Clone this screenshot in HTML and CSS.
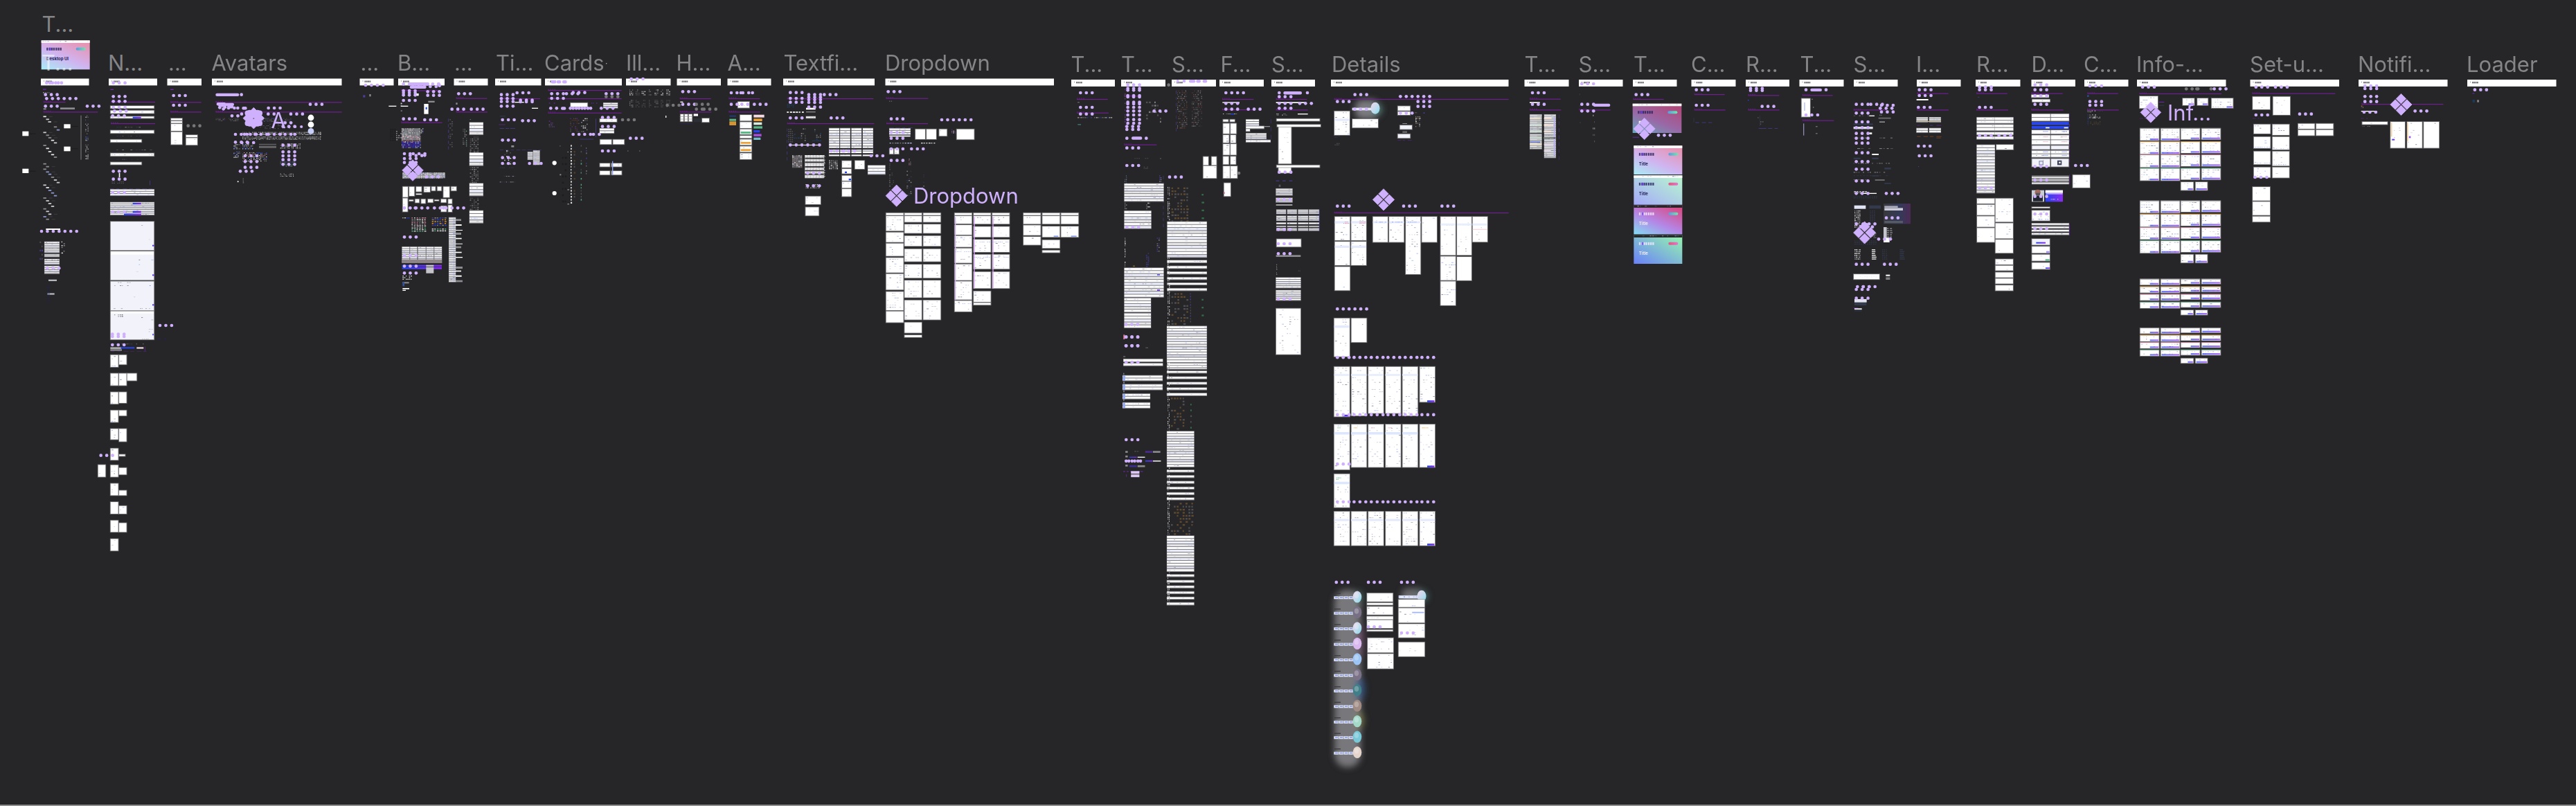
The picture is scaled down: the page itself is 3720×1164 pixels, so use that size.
FILE: index.html
```html
<!DOCTYPE html>
<html lang="en">
<head>
<meta charset="utf-8">
<title>Components</title>
<link rel="stylesheet" href="styles.css">
</head>
<body>
<main class="canvas">
<svg class="art" id="art" width="3720" height="1164" viewBox="0 0 3720 1164" aria-hidden="true">
<defs>
<linearGradient id="cta"><stop offset="0" stop-color="#2744ee"/><stop offset="1" stop-color="#8a2cf2"/></linearGradient>
<linearGradient id="dawn" x1="0" y1="1" x2=".7" y2="0"><stop offset="0" stop-color="#a9ecf6"/><stop offset=".5" stop-color="#d0b4f0"/><stop offset="1" stop-color="#e695b4"/></linearGradient>
<linearGradient id="dusk" x1="0" y1="1" x2=".7" y2="0"><stop offset="0" stop-color="#67a9bd"/><stop offset=".5" stop-color="#9968a6"/><stop offset="1" stop-color="#b04a7c"/></linearGradient>
<linearGradient id="mint" x1="0" y1="1" x2="1" y2="0"><stop offset="0" stop-color="#a5a9fb"/><stop offset="1" stop-color="#b8f8cc"/></linearGradient>
<linearGradient id="neon" x1="0" y1="1" x2=".7" y2="0"><stop offset="0" stop-color="#82dcf4"/><stop offset=".5" stop-color="#b486e6"/><stop offset="1" stop-color="#d64f8c"/></linearGradient>
<linearGradient id="lagoon" x1="0" y1="1" x2="1" y2="0"><stop offset="0" stop-color="#6a80fa"/><stop offset="1" stop-color="#96f8ac"/></linearGradient>
<linearGradient id="teal"><stop offset="0" stop-color="#5a9ae0"/><stop offset="1" stop-color="#6ee8ae"/></linearGradient>
<linearGradient id="rose"><stop offset="0" stop-color="#e0587c"/><stop offset="1" stop-color="#e276cc"/></linearGradient>
<linearGradient id="night"><stop offset="0" stop-color="#39393c"/><stop offset=".6" stop-color="#343a58"/><stop offset="1" stop-color="#4c2a54"/></linearGradient>
<linearGradient id="orb" x1="0" y1="0" x2="1" y2="1"><stop offset="0" stop-color="#f4d6ec"/><stop offset=".6" stop-color="#b9dcee"/><stop offset="1" stop-color="#7fd8e8"/></linearGradient>
<filter id="glow" x="-60%" y="-30%" width="220%" height="160%"><feGaussianBlur stdDeviation="5"/></filter>
</defs>
</svg>
<div class="labels" id="labels"></div>
</main>
<script src="canvas.js"></script>
</body>
</html>
```
FILE: styles.css
```css
body {
  margin: 0;
  background: #262628;
  font-family: Inter, "Liberation Sans", sans-serif;
}

.canvas {
  position: relative;
  box-sizing: border-box;
  width: 3720px;
  height: 1164px;
  overflow: hidden;
  border-bottom: 2px solid #8f8f90;
}

.art {
  display: block;
}

.label {
  position: absolute;
  font-size: 31px;
  line-height: 40px;
  color: #858587;
  white-space: pre;
}

.label--component {
  color: #cfb0fc;
}

.label--ghost {
  color: rgba(255, 255, 255, 0.55);
}

.title {
  font-size: 6px;
  font-weight: 700;
}
```
FILE: canvas.js
```js
const svg = document.getElementById('art');
const layers = ['base', 'dots'].map(() => {
  const g = document.createElementNS('http://www.w3.org/2000/svg', 'g');
  svg.appendChild(g);
  return g;
});
let seed = 7;
const rnd = () => (seed = (seed * 16807) % 2147483647) / 2147483647;
const pick = a => a[Math.floor(rnd() * a.length)];
const parts = [[], []];
const LILAC = '#cfb0fc';
const color = { w: '#fff', v: '#f2f3fa', g: '#8c8c90', d: '#56565a', b: '#2744ee', l: LILAC, n: '#333a4d',
  o: '#f0a030', e: '#5cb888', r: '#e58aa4', u: '#6c28a8', c: 'url(#cta)', k: '#1c1c1e', i: '#4b3fa0' };
const col = c => color[c] || c || '#fff';
const f = n => +n.toFixed(2);
const rect = (x, y, w, h, c, o = 1, rx = 0, layer = 0) =>
  parts[layer].push(`<rect x="${f(x)}" y="${f(y)}" width="${f(w)}" height="${f(h)}" rx="${rx}" fill="${c}" opacity="${o}"/>`);
const circle = (x, y, r, c, layer = 0) =>
  parts[layer].push(`<circle cx="${f(x)}" cy="${f(y)}" r="${r}" fill="${c}"/>`);
const ink = ['#9a9cac', '#b9bbc9', '#5a5f78', '#b9bbc9', '#8ea2f0', '#d0d1dc'];

function marks(x, y, w, h, density, tones) {
  for (let yy = y + 2; yy < y + h - 2; yy += 3.4) {
    for (let xx = x + 1.5; xx < x + w - 3; xx += 3.6) {
      if (rnd() < density) rect(xx, yy, 1 + rnd() * 2.2, 0.9, pick(tones || ink), 0.75);
    }
  }
}
function card(x, y, w, h, fill, density) {
  rect(x - 0.5, y - 0.5, w + 1, h + 1, '#8c8c90', 0.75);
  rect(x + 0.4, y + 0.4, w - 0.8, h - 0.8, fill);
  marks(x, y, w, h, density);
}
function diamonds(x, y, s) {
  const q = 7.1 * s;
  [[0, -8.2], [0, 8.2], [-8.2, 0], [8.2, 0]].forEach(([a, b]) => {
    const cx = x + a * s, cy = y + b * s;
    parts[1].push(`<path d="M${f(cx)} ${f(cy - q)}l${f(q)} ${f(q)}l${f(-q)} ${f(q)}l${f(-q)} ${f(-q)}z" fill="${LILAC}" stroke="${LILAC}" stroke-width=".8" stroke-linejoin="round"/>`);
  });
}

// Each block: origin x, y and units per pixel on both axes, then one drawing command per entry.
function draw(ox, oy, sx, sy, text) {
  const X = v => ox + v / sx, Y = v => oy + v / sy;
  text.split(/[;\n]/).map(s => s.trim()).filter(Boolean).forEach(line => {
    const [cmd, ...raw] = line.split(/\s+/);
    const a = raw.map(v => (isNaN(v) ? v : +v));
    const x = X(a[0]), y = Y(a[1]), w = a[2] / sx, h = a[3] / sy;
    if (cmd === 'W') rect(x, y, w, h, col(a[4]));
    else if (cmd === 'D' || cmd === 'G') for (let i = 0; i < a[2]; i++) circle(x + i * 8.45, y, 2.35, cmd === 'D' ? LILAC : '#77777a', 1);
    else if (cmd === 'Q') rect(x, y, w, 4.4, LILAC, 1, 2, 1);
    else if (cmd === 'L') {
      rect(x, y - 0.4, w, 1.2, '#6f1f92');
      for (let i = 0; i < 4; i++) rect(x + i * 3, y - 1.8, 1.8, 1.2, '#6f1f92', 0.7);
    } else if (cmd === 'K') card(x, y, w, h, '#fff', a[4] === undefined ? 0.22 : a[4]);
    else if (cmd === 'V') card(x, y, w, h, '#f2f3fa', 0.01);
    else if (cmd === 'I') {
      card(x, y, w, h, '#fff', 0.4);
      if (a[5]) rect(x, y - 0.6, w, 1, col(a[5]), 0.8);
      rect(x + w * a[4], y + h - 3, w * (1 - a[4]) - 1, 2.2, 'url(#cta)', 0.7);
    } else if (cmd === 'S') {
      const n = a[4], p = h / n;
      rect(x - 0.4, y - 0.4, w + 0.8, h + 0.8, '#828288');
      for (let i = 0; i < n; i++) {
        const yy = y + i * p;
        rect(x, yy + 0.4, w, Math.max(p - 1.1, 1), i % 3 === 2 ? '#eceefa' : '#fff', i % 4 === 3 ? 0.8 : 1);
        for (let xx = x + 2; xx < x + w - 3; xx += 4) if (rnd() < 0.25) rect(xx, yy + p * 0.35, 1.5 + rnd() * 2, 0.8, pick(ink), 0.6);
        if (a[5]) rect(x + w * 0.6, yy + p * 0.3, w * 0.3, 1, col(a[5]), 0.45);
      }
    } else if (cmd === 'N') {
      const cw = a[4] / sx, ch = a[5] / sy, tones = String(a[6] || 'g').split(',').map(col), dens = a[7] || 0.7;
      // Narrow columns are dashed rules and keep their full dash length
      const mh = a[2] > 4 ? Math.min(ch * 0.55, 2.4) : ch * 0.55;
      for (let yy = y; yy < y + h - 0.4; yy += ch) for (let xx = x; xx < x + w - 0.4; xx += cw)
        if (rnd() < dens) rect(xx, yy, Math.min(cw, w) * (0.45 + rnd() * 0.35), mh, pick(tones), 0.85);
    } else if (cmd === 'Z') {
      for (let i = 0; i < a.length; i += 2) {
        rect(X(a[i]) - 2.2, Y(a[i + 1]) - 0.9, 4.4, 1.8, pick(['#c8c8cc', '#8c8c90', '#e4e4ea', '#8896c8']));
        if (rnd() < 0.5) rect(X(a[i]) + 6, Y(a[i + 1]) - 0.5, 5, 1, '#3c3c40');
      }
    } else if (cmd === 'O') circle(x, y, a[2], col(a[3]));
    else if (cmd === 'M') diamonds(x, y, a[2] || 1);
    else if (cmd === 'R') {
      const [, , , , grad, pill, dark, word] = a;
      rect(x, y, w, h, `url(#${grad})`);
      if (grad !== 'lagoon' || dark) rect(x, y, w, 3.6, dark ? '#262628' : '#fff');
      marks(x, y - 1, w, 6, 0.4);
      const t = dark ? '#f4ecff' : '#25215a';
      [0, 3.4, 6.6, 9.6, 13, 16.2, 19.4].forEach(i => rect(x + 7.5 + i, y + 10.5, 2.3, 4, t, 0.8));
      rect(x + 11.5, y + 10.5, 2.4, 4, '#6a3cf0', 0.8);
      rect(x + w - 20, y + 10.5, 14, 4, `url(#${pill})`, 1, 2);
      if (word) parts[0].push(`<text class="title" x="${f(x + 7.5)}" y="${f(y + 29)}" fill="${t}">${word.replace('_', ' ')}</text>`);
    }
  });
}

const bars = [[[59, 128.5], [157, 227], [241.5, 291], [306, 493.5], [519.5, 568.5], [575, 642], [655.5, 704.5], [715, 781.5],
  [787, 898], [904, 968.5], [977.5, 1041], [1050.5, 1113.5], [1131, 1263], [1278.5, 1522]],
[[1547, 1610], [1619, 1683], [1692, 1756], [1761, 1825], [1836, 1899], [1922, 2178.5], [2201.5, 2265.5], [2280, 2343.5],
  [2358, 2421.5], [2442.5, 2506.5], [2521, 2584], [2598.5, 2662.5], [2677, 2740.5], [2768, 2831.5], [2853, 2917.5],
  [2933.5, 2997], [3010, 3073.5], [3086, 3214.5], [3249.5, 3378], [3406, 3534.5], [3563, 3691.5]]];
bars.forEach((row, i) => row.forEach(([a, b]) => {
  const y = i ? 115 : 113.5;
  rect(a, y, b - a, 9.9, '#fff');
  rect(a + 4, y + 3, 1, 1, '#777');
  for (let k = 0; k < 4; k++) rect(a + 7 + k * 2.3, y + 3, 1.9, 2.4, '#44444c', 0.75);
}));

draw(0, 0, 3, 3, `
R 179 175 210 126 dawn teal 0 Desktop_UI
W 97 569 27 20;W 97 731 27 19;W 277 538 28 18;W 277 635 28 20
W 130 578 24 3 k;W 312 546 26 3 k;W 312 643 26 3 k;W 130 740 24 3 k
W 349 500 4 192 #6d6d6f;W 261 466 63 8 g;W 188 469 12 6 g;W 186 385 14 4 u;N 186 400 30 6 8 6 w,g
D 202 359 3;D 216 359 3;D 197 410 3;D 202 427 6;D 197 460 3;D 378 460 3;L 188 442 96;L 188 485 236
Z 194 505 206 517 215 528 240 550 252 563 194 574 206 586 216 597 228 608 240 619 194 630 206 643 216 657 228 670 240 681 194 710 206 722 194 733 206 745 216 755 228 768 240 780 252 791 194 802 206 813 216 825 228 836 240 848 194 858 206 870 216 882 228 894 194 905 206 916 216 928 194 939 206 950
N 370 500 14 80 5 6 g,w,n;N 370 592 14 18 5 5 b,w,g;N 370 626 14 64 5 6 g,w
W 199 990 62 6;D 180 1002 7;S 193 1047 64 48 6;S 193 1101 64 12 2;S 193 1122 64 24 3;S 193 1152 64 34 4;D 205 1162 3
N 266 1046 18 50 9 8 w,g;N 172 1046 12 82 8 18 d,i;W 210 1211 36 7 #b4b6be;W 205 1270 31 7 #b4b6be;N 205 1235 10 80 6 9 #252550
D 491 359 3;D 491 418 3;D 491 439 3;D 491 465 3;D 496 481 3;D 488 502 3;L 480 442 192;L 480 535 192;W 478 386 14 4 u
K 478 458 190 12;K 478 478 190 14;K 478 504 190 9;W 575 506 36 7 c
N 505 550 100 5 12 5 g,d,n;K 478 564 190 14;N 505 588 100 5 12 5 d,n;K 478 604 136 13;N 505 648 150 5 12 5 g,d,n;K 478 663 190 14;N 505 689 100 5 8 5 d,n;K 478 702 136 12
D 491 742 3;W 515 750 5 18 w;D 491 776 3;N 484 786 50 12 8 6 d;W 648 782 2 20 i
N 476 817 194 3 28 3 i 1;S 478 820 190 28 3;D 488 834 3;S 478 876 190 56 7;W 575 879 36 7 c;W 575 914 36 7 c;W 537 926 75 7 c;D 488 918 3
V 478 959 190 126;V 478 1088 190 126;W 480 1089 186 14;V 478 1218 190 128;V 478 1348 190 124;W 480 1349 186 9
N 490 1223 90 4 10 4 g;N 495 1236 65 4 8 4 g,d;N 632 1236 22 4 8 4 b;N 492 1336 40 4 16 4 g;N 598 1336 50 4 8 4 g;N 495 1362 45 12 8 7 g,d
W 660 1061 8 6 c;W 660 1189 8 6 c;W 660 1318 8 6 c;D 693 1410 3
D 752 414 3;D 752 456 3;L 738 443 134;L 738 485 134;W 738 386 14 4 u;K 740 512 50 10;K 740 524 50 10;K 740 536 50 32;K 740 571 50 56;K 805 584 51 11;K 805 597 51 32;G 815 545 3
L 934 443 547;L 934 485 547;Q 934 404 102;D 1046 410 1
Q 938 444 40;Q 946 450 30;Q 966 446 48;Q 984 456 28;D 952 466 1;D 968 472 1;D 975 464 1;D 990 468 2;D 1030 468 1;Q 1048 462 22;D 1163 468 3;D 1005 502 2;D 1047 494 1;D 1162 494 2
N 935 512 42 14 6 5 d,g,u;N 990 512 46 14 5 5 d,g;N 1120 512 140 14 6 6 d,g,i;N 1105 537 150 20 7 6 d,k;N 1050 572 340 12 7 5 w,g 0.95;N 1050 592 340 12 6 5 w,g 0.95
D 1020 582 3;D 1059 582 3;D 1105 582 3;D 1163 582 3;D 1235 582 2;D 1277 582 1;D 1020 616 3;D 1048 618 3;D 1235 532 2;D 1226 548 3
N 1012 625 26 24 6 6 b,w,g;N 1012 656 26 28 6 6 w,b,g;N 1050 625 45 24 6 6 w,b,g;W 1122 623 75 6 d;W 1122 633 75 8 #68686b
N 1050 660 106 38 6 6 w,g,r,b;D 1062 675 3;D 1062 700 3;D 1062 725 3;D 1041 742 3
D 1226 629 3;D 1226 658 3;D 1226 675 3;D 1226 692 3;D 1226 712 3;N 1214 622 86 24 6 6 w,g;N 1214 700 66 20 6 6 e,i,g;N 1214 752 60 16 5 5 w,g
M 1099 512 1;O 1347 510 4.4 w;O 1347 540 4.4 w;O 1347 568 4.4 #c8d0fa;N 1338 506 18 6 6 5 g
O 1031 787 1 w;N 1052 772 6 20 6 6 g;D 1344 452 3;D 1260 494 3`);
[[-11, -9], [11, -9], [-11, 9], [11, 9], [-4, -4], [4, -4], [-4, 5], [4, 5], [-7, -10], [7, -10], [-7, 10], [7, 10]]
  .forEach(([a, b]) => circle(366.3 + a * 0.8, 170.7 + b * 0.8, 4, LILAC, 1));

draw(420, 0, 3, 3, `
D 324 369 4;W 313 412 9 10 i;W 340 408 7 10 g;W 424 458 33 4;W 476 458 32 4;N 430 558 26 50 9 8 k 1
D 488 364 7;D 528 375 5;D 640 364 1;D 644 371 1;Q 510 357 90;Q 515 371 72;D 488 393 3;D 593 397 3;D 488 412 3;D 593 413 3;D 488 402 3;D 488 435 3;L 478 392 165
W 540 405 14 10;N 476 446 10 36 9 8 w,g;W 595 437 28 7 g;W 577 450 19 44 w;W 584 464 6 10 b;D 488 515 3;D 580 519 3;L 478 531 178
W 480 556 80 52 #6e6e74;W 480 614 80 24 #2c2470
N 480 556 84 40 5 6 w,g,#9aa 0.95;N 480 588 84 26 5 6 w,r,g 0.95;N 480 614 84 26 5 6 b,i,u,w 0.95;N 456 567 20 42 9 9 g;N 564 556 12 22 6 6 b,w
D 492 666 1;D 517 666 1;D 530 666 3;D 517 674 3;D 580 673 1;D 492 687 3;D 492 704 3;M 528 738 1;Q 514 700 26
W 484 748 185 24 #8e8e96;N 484 748 185 24 8 7 w,#b8c4f4,#eed 0.95;D 588 766 3
K 484 808 24 47;K 512 808 24 42;K 542 808 25 23;K 576 808 28 25;K 609 808 18 19;K 634 808 19 19;K 660 808 28 48;K 694 808 24 19;K 542 838 25 6
K 484 858 23 60;K 512 865 19 7;K 538 862 19 17;K 564 862 20 20;K 593 862 24 16;K 622 865 20 6;K 650 862 24 16;K 681 862 18 21;K 650 892 25 26;K 681 888 18 31
D 492 901 1;D 517 901 4;D 539 901 1;D 622 901 6;D 661 901 1
N 484 942 28 7 8 7 w,b;N 523 942 64 40 11 7 w,g,r 1;N 523 986 64 20 11 7 w,e 1;N 611 942 64 40 11 8 b,i,g,o 1;N 611 990 64 10 11 8 e,w 1
S 685 942 29 280 34 #9aa8e8;W 714 949 24 8 g;W 714 972 26 6 w;W 714 996 30 3;W 714 1008 24 9 g;W 714 1031 26 5;W 714 1055 30 3;W 714 1067 24 8 g;W 714 1091 26 5;W 714 1113 30 4;W 714 1155 30 9 g;W 714 1172 24 5;W 714 1193 26 6;W 714 1214 30 8 g
D 492 1027 3;S 482 1069 32 70 8;S 517 1069 30 70 8;S 551 1069 33 70 8;S 587 1069 32 70 8;S 622 1069 32 70 8;W 482 1124 172 15 #8d8588;D 492 1107 3
W 482 1148 172 18 c;W 586 1148 33 36 #c4c4ca;W 482 1155 172 2 #111130;D 492 1153 3;D 492 1183 3;N 484 1194 42 18 7 7 w;W 484 1222 28 6 g;W 484 1222 8 18 #34509a;W 484 1248 29 5;W 484 1256 14 4
D 727 406 3;L 716 426 134;W 715 445 7 8 g;D 698 473 3;D 782 473 3;L 716 485 136;N 682 514 4 130 4 24 i 1;N 688 516 16 124 8 9 d;N 745 558 18 76 7 8 d,g,e;N 776 516 7 10 6 6 g
S 774 530 59 54 4;N 776 592 36 66 8 8 d,g;S 774 661 59 57 4;N 776 724 36 66 8 8 d,g;S 774 794 59 55 4;N 776 857 36 50 8 8 d,g;S 774 912 59 55 4
D 980 402 3;D 912 410 3;D 912 427 3;D 912 440 3;D 995 434 3;D 995 441 3;D 912 460 3;L 905 427 175;W 970 441 40 4;W 1044 467 27 4;W 905 502 24 3 n;D 917 519 3;D 1004 523 3;W 901 539 28 2 u
W 905 556 20 2 i;W 930 556 16 2 i;W 950 556 22 2 i;D 917 607 3;W 955 630 12 8 g;N 905 649 175 3 24 3 i 1;N 925 652 30 60 8 8 w,d 0.4;D 917 683 3;D 917 708 3;S 1050 652 28 62 11;S 1026 658 22 34 6;D 1034 708 1;D 1059 708 2;N 960 560 6 40 6 9 #252550;N 905 725 60 3 8 6 n;N 905 762 65 4 9 6 g,n;N 905 787 65 4 9 6 g,n`);

draw(760, 60, 3, 3, `
W 345 93 4 4 #b0b0b0
Q 106 168 24;Q 131 168 20;Q 156 168 20;L 94 211 319;L 94 247 319;L 94 309 319;D 110 226 3;D 174 226 1;D 199 226 1;D 203 221 1;D 224 226 1;D 228 221 2;D 346 226 3;G 346 239 3;D 110 246 3
K 191 265 75 19 0;S 334 265 62 24 3;D 106 289 2;Q 150 283 22;D 191 289 4;D 203 289 4;D 325 289 3;N 98 265 24 8 7 7 u,d;N 282 265 34 8 7 7 u
N 98 335 26 34 7 8 g,d,u 0.6;N 190 332 40 64 7 7 d,#63331f,u 0.5;N 237 332 30 64 8 8 g,w,d 0.45;W 300 334 2 80 i;D 203 402 2;D 253 402 2;D 291 402 2;W 232 422 60 2 i
K 318 334 75 15;D 330 329 3;D 330 368 3;S 318 376 62 22 2;K 319 424 51 22;K 375 424 50 22;D 330 474 3;K 318 527 45 16;K 369 527 45 16;K 318 560 45 18;K 369 560 45 18;W 372 518 4 60 #8ea2f0;G 417 339 3
O 122 526 3.1 w;O 122 657 3.1 w;N 192 448 8 258 8 13 w 1;N 206 448 10 258 9 13 #5a4426,d 0.6;N 236 448 6 240 6 13 e,d 0.6;N 259 448 5 125 5 11 g,i;N 145 445 6 10 6 6 g;N 178 478 8 3 8 3 w;N 155 500 16 200 12 27 k;W 178 640 8 4 g;W 178 702 8 4 g;W 145 574 6 6 g
D 455 162 3;N 447 208 18 28 6 7 w,g;N 474 208 15 28 6 7 g,d;N 500 208 15 28 6 7 g,w;N 531 208 12 28 6 7 g;N 556 208 14 28 6 7 w,g;N 583 208 12 28 6 7 w,g;N 607 208 14 28 6 7 w,g
N 447 253 18 36 6 7 d,g;N 474 253 15 36 6 7 d;N 500 253 15 36 6 7 d;N 531 253 12 36 6 7 d;N 556 253 14 36 6 7 g,d;N 583 253 12 36 6 7 d;N 607 253 14 36 6 7 d
G 611 276 3;W 603 321 4 9;D 451 419 3;W 439 472 3 4 g;W 490 472 3 4 g
D 678 217 3;L 665 247 135;D 678 272 3;G 737 272 3;G 737 293 2;G 770 293 1;G 795 293 1;G 821 293 1;L 665 305 137;W 667 260 12 4
K 667 314 15 33;K 685 314 15 33;K 703 314 16 33;W 665 324 56 2 g;W 665 335 56 2 g;W 725 313 19 10;W 725 333 34 16 #2c3036;K 761 332 32 18 0;W 665 354 56 2 #2a2a60
D 888 222 1;D 913 222 3;D 930 222 1;D 980 222 1;L 877 247 135;K 916 260 51 28 0.1;D 888 272 2;D 934 272 2;D 988 272 3;L 877 305 136;W 880 260 26 2 n
W 880 320 29 6 #223a7a;W 880 335 29 9 e;W 880 346 29 17 #d49434;W 880 366 29 3 #224
K 925 317 52 27;K 925 348 52 28;K 925 379 52 24;W 929 390 44 9 e;K 925 407 52 12;K 925 423 52 26;W 929 435 44 8 o;K 925 453 52 26;W 929 466 44 8 o;K 925 483 52 28
W 985 317 46 12 #f4dbe2;W 985 334 37 11 o;W 985 350 36 11 #d6ecdf;W 985 367 38 10 e;W 985 384 27 10 b;W 985 400 34 11 #a44cd8;W 985 416 30 10 #74bcc8
D 1144 221 3;D 1144 246 3;D 1144 263 3;D 1224 230 3;D 1291 230 3;D 1224 241 3;D 1224 252 3;D 1224 264 3;D 1224 284 3;L 1130 247 374;L 1130 355 377
N 1130 270 40 14 8 6 #246;N 1129 303 78 11 13 11 w 1;W 1212 287 41 8;W 1212 303 41 4 g;S 1212 324 41 9 1;D 1144 331 3;D 1321 331 3
N 1129 376 3 130 3 25 i 1;N 1135 378 22 60 8 9 d;N 1190 376 25 60 8 10 d,g 0.5;N 1160 400 30 30 8 8 #247 0.4;N 1240 380 40 54 8 8 #247,g 0.4;W 1140 447 130 3;D 1144 448 2;D 1194 448 4
S 1312 375 44 122 11;S 1360 375 43 122 11;S 1409 375 43 122 11;S 1458 375 44 122 11;W 1312 462 190 6 #262628;W 1312 484 190 6 #262628;D 1321 474 5;D 1376 474 1;D 1494 495 3
W 1152 493 44 54 #58585c;N 1152 493 44 54 9 6 w,g,#977 0.95;W 1207 492 82 100 #c8c8cc;N 1207 492 82 100 13 5 w 1;W 1207 503 82 6 #3a3a3c;W 1207 520 82 6 #3a3a3c;W 1207 540 82 6 #3a3a3c;W 1207 557 82 5 #3a3a3c;W 1207 572 82 6 #3a3a3c;D 1219 570 3;D 1219 625 3;N 1210 618 62 20 7 7 w,g
K 1209 670 67 36;K 1209 717 59 38;N 1312 514 35 40 8 7 w,g 0.95;K 1367 516 42 31;K 1367 551 42 22;K 1367 580 42 24;K 1367 606 42 29;K 1367 638 42 34;K 1423 515 43 38;S 1480 536 75 40 3;W 1380 563 9 7 b;W 1397 594 10 7 b`);

draw(1250, 60, 3, 3, `
D 98 217 3;L 88 246 183;N 86 257 28 5 8 5 g;D 111 335 3;D 330 339 6;L 90 355 180;N 102 372 90 3 28 3 i 1
S 103 376 44 28 3;S 148 376 46 28 3;W 103 407 91 5;D 111 394 3;D 111 419 3;K 215 379 44 45 0.02;K 263 379 44 45 0.02;K 318 379 35 31 0.1;N 372 380 16 20 7 5 w,i,r;K 394 379 77 46 0.12
N 104 438 98 7 11 7 g,#c8d0ff 0.9;N 240 438 60 7 11 7 w,#a8b8ff 1;K 103 463 18 25;K 124 463 21 25;D 111 465 3;D 199 465 3;D 111 515 3;N 187 508 8 30 6 6 r,g
N 103 520 6 150 6 8 g,d;N 113 560 8 60 6 8 d 0.5;N 178 560 20 110 8 8 n,g 0.5;N 243 568 14 70 7 8 n,g 0.5;M 134 668 1.02
K 88 742 77 11;K 88 755 77 66 0.3;K 88 826 77 44;K 88 874 77 56;K 88 936 77 66 0.3;K 88 1006 77 70;K 88 1083 77 82 0.3;K 88 1168 77 50 0.1
K 168 742 76 11;K 168 755 76 28;K 168 791 76 40 0.3;K 168 841 76 46 0.3;K 168 898 76 56 0.3;K 168 965 76 60 0.3;K 168 1034 76 76 0.3;K 168 1120 76 86 0.3;K 168 1216 76 47 0.1;K 168 1271 76 11
K 249 742 77 11;K 249 755 77 28;K 249 791 77 40;K 249 841 77 46;K 249 898 77 56;K 249 965 77 60;K 249 1034 77 76;K 249 1120 77 86
K 385 742 76 11;K 385 755 76 35;K 385 794 76 44;K 385 841 76 50;K 385 895 76 65;K 385 964 76 71;K 385 1038 76 81;K 385 1122 76 49 0.08
K 467 742 76 11;K 467 755 76 36;K 467 801 76 47;K 467 857 76 56;K 467 922 76 64;K 467 997 76 73;K 467 1081 76 48 0.1;K 467 1131 76 11
K 548 742 76 11;K 548 755 76 36;K 548 801 76 47;K 548 857 76 56;K 548 922 76 64;K 548 997 76 73
W 387 760 4 360 #d0b0f0;W 469 760 4 310 #d8a0f4;W 550 760 4 310 #d8a0f4
N 387 850 70 4 8 4 #8ea2f0;N 387 909 70 4 8 4 #8ea2f0;N 470 867 70 4 8 4 #8ea2f0;N 550 867 70 4 8 4 #8ea2f0;N 470 933 70 4 8 4 #8ea2f0;N 550 933 70 4 8 4 #8ea2f0;N 387 1135 70 4 8 4 #8ea2f0
K 683 742 76 11;K 683 755 76 36 0.1;K 683 795 76 45 0.1;K 683 845 76 37 0.1;K 765 742 77 11;K 765 755 77 36 0.1;K 765 800 77 48 0.1;K 765 859 77 37 0.08;K 765 904 77 11;K 846 742 77 11;K 846 755 77 36 0.1;K 846 800 77 48 0.1
W 815 841 20 5 #8ea2f0;W 890 841 24 5 #8ea2f0
D 931 222 3;L 915 250 134;W 918 261 9 5 d;D 931 285 3;L 915 309 138;D 931 314 3;N 919 328 160 6 8 6 w,b,g 0.9;W 919 357 14 5 #3a6a6a`);

draw(1580, 60, 3, 3, `
D 146 188 3;D 146 203 3;D 146 211 3;D 146 234 3;D 146 240 3;D 146 263 3;D 146 270 3;D 146 285 3;D 146 301 3;D 146 318 3;D 146 338 3;D 146 354 3;D 142 368 3;D 142 381 3;L 130 236 60
D 260 301 3;N 225 260 65 90 12 14 d,g 0.35;N 132 205 6 180 6 10 u,d 0.5;D 142 419 1;Q 162 412 46;D 226 419 1;L 130 447 141;D 142 461 3;N 175 505 60 4 9 5 d;W 285 505 6 4 d;D 142 537 3;N 215 542 22 10 7 6 d
N 132 580 12 34 6 8 #68a,d;N 282 580 12 34 6 8 g,i;N 299 582 3 224 3 26 i 1;S 131 615 170 78 7;N 132 698 10 32 6 8 g;N 226 698 14 32 6 8 w,g;S 131 733 116 78 6;D 142 804 3
N 132 850 8 125 7 8 g,w;N 272 850 14 60 7 8 g,i;N 226 916 14 60 7 8 i,b;W 168 971 9 3 #a58030;S 131 980 170 128 10;W 273 1008 12 5 #5a5ad8;W 273 1074 12 6 #7a4ad8;S 131 1111 115 62 5;S 131 1177 115 64 5;D 138 1226 3
D 138 1280 3;W 127 1270 6 20 r;D 138 1318 3
Q 356 165 12;D 390 171 1;Q 411 165 28;Q 442 165 20;Q 470 165 20;G 323 188 1;N 354 212 3 168 3 27 i 1;N 360 212 45 165 5 8 d,#704030,g,#333 0.7;N 424 212 46 155 5 8 d,#704040,g,#333 0.7;D 327 587 3
N 318 630 8 148 6 7 g,w;N 335 632 70 145 13 13 d,#6a5030 0.5;N 466 660 14 118 14 34 #347850 1;S 317 780 171 156 12
S 317 947 171 12 1;S 317 972 171 12 1;S 317 997 171 11 1;S 317 1021 171 11 1;S 317 1045 171 10 1;S 317 1069 171 11 1;N 318 937 8 296 6 7 g,w;N 335 1090 70 145 13 13 d,#6a5030 0.5;N 466 1115 14 100 14 34 #347850 1;N 416 1090 5 140 5 12 i,d
S 317 1234 171 186 14
K 472 498 24 38 0.1;K 508 498 23 38 0.1;K 472 538 59 55 0.15
D 571 222 4;L 555 250 136;D 571 268 3;W 556 262 74 4;D 571 293 3;D 668 293 3;L 555 295 135;N 558 312 68 5 7 5 w,g;W 592 312 14 4 b
K 558 337 24 11;K 588 337 22 11;K 558 354 29 46;K 590 354 27 46;K 558 404 27 35;K 590 404 25 36;K 558 443 30 49;K 590 443 27 49;K 558 497 26 36;K 590 497 25 36;K 558 539 31 54 0.1;K 590 539 31 54 0.1;K 562 612 30 59 0.04;W 563 652 4 8 r;G 627 570 1
S 658 337 56 30 3;S 658 366 78 12 1;S 658 378 17 12 1;W 736 366 26 4 g;S 658 397 88 26 3;S 658 426 106 11 1;N 765 336 3 102 3 34 i 1
D 802 222 1;Q 820 216 80;D 924 222 1;D 802 239 3;L 788 250 134;D 802 268 3;W 788 262 130 5;D 891 268 1;D 916 268 2;D 802 289 3;L 788 296 138;N 790 312 44 10 6 5 g,w;W 882 312 44 4
K 798 368 57 162 0.14;K 790 334 188 11 0.02;K 792 359 190 11 0.02;K 798 540 56 30 0.05;K 790 535 188 11 0.02;D 802 566 3
W 788 602 14 3 i;W 816 602 14 3 i;W 845 602 14 3 i;W 800 620 8 10 d;S 788 637 71 30 4;S 788 677 71 20 3;W 788 706 71 4 #ddd;D 798 684 3
S 790 728 41 20 3;S 837 728 41 20 3;S 884 728 43 20 3;S 931 728 43 20 3;S 790 755 41 22 3;S 837 755 41 22 3;S 884 755 43 22 3;S 931 755 43 22 3;S 790 784 41 8 1;S 837 784 41 8 1;S 884 784 43 8 1;S 931 784 43 8 1;S 790 798 41 22 3;S 837 798 41 22 3;S 884 798 43 22 3;S 931 798 43 22 3;W 976 728 2 92 i
W 788 748 188 5 #2c2c2e;W 788 778 188 5 #2c2c2e;W 788 793 188 5 #2c2c2e;W 788 803 188 5 #2c2c2e;D 798 814 3
K 790 855 107 35 0.03;D 798 876 3;D 798 919 3;W 788 925 107 8 g;N 789 965 6 45 6 7 g;N 878 992 16 4 6 5 d
S 788 1022 107 46 5;S 788 1077 107 45 5;D 798 1115 3`);

draw(1580, 440, 2.613, 2.272, `
S 275 70 150 120 14;S 275 199 150 8 1;S 275 217 150 8 1;S 275 236 150 8 1;S 275 254 150 8 1;S 275 272 150 8 1;S 275 290 150 9 1;N 277 190 8 225 5 6 g,w;N 290 305 50 105 11 10 d,#6a5030 0.45;N 363 325 8 85 8 19 #347850,d 1
S 275 415 102 118 14;S 275 542 102 8 1;S 275 560 102 8 1;S 275 579 102 8 1;S 275 598 102 8 1;S 275 616 102 8 1;S 275 633 102 8 1;N 277 535 8 220 5 6 g,w;N 290 650 80 105 11 10 d,#6a5030 0.45
S 275 758 102 118 13;S 275 885 102 8 1;S 275 904 102 8 1;S 275 922 102 8 1;S 275 941 102 8 1;S 275 959 102 8 1;S 275 977 102 9 1;N 277 878 8 106 5 6 g,w
D 121 106 3;D 121 135 3;W 110 168 8 5 d;S 111 178 148 10 1;S 111 192 148 9 1;D 121 189 3;W 194 140 10 3 d
S 108 232 150 18 2;S 108 261 150 19 2;S 108 292 103 18 2;S 108 321 103 19 2;W 109 233 8 17 #90a4f4;W 109 262 8 17 #90a4f4;W 109 293 8 17 #90a4f4;W 109 322 8 17 #90a4f4;N 110 224 8 92 8 29 g 1
D 121 443 3;W 118 480 9 6 g;N 132 480 50 4 10 5 d;W 193 480 28 6 #4a2c90;W 222 480 28 6 g;W 118 495 9 6 g;W 133 499 28 3 c;W 164 499 28 3 w;D 121 513 3;D 131 513 3;W 193 511 28 4 c;W 222 511 30 4 #ddd;W 118 525 9 6 g;W 133 527 28 6 #3a2c90;W 164 527 28 6 g
N 110 546 70 5 13 5 u;W 139 546 32 20 #dcc8f0;W 137 555 36 2 k;W 121 557 2 8 u
K 686 12 94 152 0.12
D 918 14 6;K 905 44 60 127 0.1;K 970 44 59 80 0.04;W 906 68 58 8 #e4eafc
D 918 173 1;D 940 173 2;D 981 173 3;D 1046 173 3;D 1109 173 3;D 1174 173 3;D 1237 173 3
K 905 203 60 165;K 970 203 59 162;K 1034 203 59 154;K 1099 203 59 154;K 1163 203 59 162;K 1228 203 59 117;W 906 227 58 7 #e8eefc;W 970 227 58 7 #e8eefc;W 1034 227 58 7 #e8eefc;W 1099 227 58 7 #e8eefc;W 1163 227 58 7 #e8eefc;W 1257 314 27 6 c;W 937 361 26 6 c
D 918 361 3;D 981 361 3;D 1046 361 3;D 1109 361 3;D 1174 361 3;D 1237 361 3
K 905 392 60 150 0.18;K 970 392 59 142 0.16;K 1034 392 59 142 0.16;K 1099 392 59 142 0.16;K 1163 392 59 142 0.16;K 1228 392 59 142 0.14;W 906 418 58 8 #dce6fc;W 970 418 58 8 #dce6fc;W 1034 418 58 8 #dce6fc;W 1099 418 58 8 #dce6fc;W 1163 418 58 8 #dce6fc;W 1257 528 27 6 c;D 918 523 3
N 918 403 14 4 5 4 e 1;N 980 403 14 4 5 4 o 1;N 1045 403 14 4 5 4 r 1;N 1109 403 14 4 5 4 r 1;N 1172 403 14 4 5 4 e 1;N 1237 403 22 4 5 4 o 1
K 905 555 60 111 0.18;W 906 581 58 8 #dce6fc;N 914 567 18 10 5 5 e
D 918 647 3;D 981 647 3;D 1046 647 3;D 1109 647 3;D 1174 647 3;D 1237 647 3
K 905 678 60 113;K 970 678 59 113;K 1034 678 59 113;K 1099 678 59 113;K 1163 678 59 113;K 1228 678 59 113;W 906 703 58 7 #e4eafc;W 970 703 58 7 #e4eafc;W 1034 703 58 7 #e4eafc;W 1099 703 58 7 #e4eafc;W 1163 703 58 7 #e4eafc;W 1228 703 58 7 #e4eafc;W 1257 784 27 6 c
D 914 911 3;D 1035 911 3;D 1160 911 3
K 1029 946 99 29 0.1;K 1029 978 99 8 0;K 1029 990 99 28 0.1;S 1029 1022 99 12 1;K 1029 1034 99 28 0.1;K 1029 1066 99 6 0;D 1035 1057 3;K 1031 1093 99 49 0.16;K 1031 1145 99 50 0.16`);

// Glowing profile strips
parts[0].push('<g filter="url(#glow)"><rect x="1927" y="852" width="38" height="256" rx="18" fill="#78787c"/><ellipse cx="1962" cy="862" rx="6" ry="9" fill="#5a8a7a" opacity=".6"/><ellipse cx="1965" cy="925" rx="6" ry="25" fill="#7a4a72" opacity=".5"/><ellipse cx="1964" cy="995" rx="7" ry="16" fill="#35609a" opacity=".7"/><ellipse cx="1964" cy="1040" rx="6" ry="12" fill="#9a9a50" opacity=".5"/><rect x="2024" y="850" width="32" height="20" rx="8" fill="#6c6c70"/><circle cx="2054" cy="861" r="8" fill="#45706c"/><rect x="1957" y="144" width="34" height="28" rx="10" fill="#7c7c80"/><circle cx="1988" cy="158" r="8" fill="#557f78"/></g>');
['url(#orb)', '#777084', 'url(#orb)', '#d8b8ee', '#9cc4f4', '#7c7288', '#417f88', '#a08c84', '#a4d8c8', '#78c8d8', '#e4d4cc'].forEach((c, i) => {
  const y = 862 + i * 22.45;
  rect(1926.3, y - 0.8, 28, 4, '#dfe5fb');
  [0, 7, 14, 21].forEach(d => { rect(1928 + d, y + 0.3, 4, 1.4, '#7f8fd8'); rect(1932.8 + d, y - 0.8, 0.7, 4, '#777'); });
  rect(1927, y - 5.5, 9, 1.2, '#38383c');
  parts[0].push(`<ellipse cx="1960" cy="${f(y)}" rx="6.3" ry="8.6" fill="${c}"/><ellipse cx="1959" cy="${f(y - 2)}" rx="3.2" ry="4" fill="#fff" opacity=".25"/>`);
});
parts[0].push('<ellipse cx="2053" cy="861" rx="6.5" ry="8.5" fill="url(#orb)"/><ellipse cx="1986" cy="156.3" rx="6.5" ry="8.5" fill="url(#orb)"/>');

draw(1580, 440, 2.613, 2.272, `
W 1149 954 72 10 #dfe5fb;N 1150 957 70 5 9 6 #7f8fd8,#b0b8e8;K 1148 967 100 26 0.14;K 1148 995 100 49 0.16;W 1200 1008 45 4 #a0b4fa;K 1148 1047 100 46 0.1;D 1160 1077 3;K 1148 1107 100 48 0.14`);

draw(1900, 60, 3, 3, `
L 80 250 756;D 170 230 3;D 367 238 6;D 94 260 3;D 443 260 3;D 443 281 3;K 80 301 68 105 0.25;W 82 334 64 10 #e4eafc;N 82 408 20 12 8 6 n;N 82 440 20 8 8 6 d
W 158 287 82 11 #e4e6f4;D 169 293 3;K 158 335 113 39 0.12
K 355 279 55 21 0.3;K 355 303 55 16;D 367 310 3;N 430 307 12 4 6 5 g;W 467 307 5 5 i;N 432 324 18 50 8 7 g,w,#a08070;W 376 354 20 3 g;V 364 362 54 19;W 376 388 20 8 #666;V 355 400 55 19;N 355 426 64 3 22 3 u 1
M 294 685 1.02;D 94 713 3;D 381 713 3;D 547 713 3;L 80 742 756
K 82 758 67 104;K 153 758 67 104;K 82 866 67 104;K 153 866 67 104;K 82 975 67 104 0.04;W 83 778 65 10 #e4eafc;W 154 778 65 10 #e4eafc;W 83 884 65 10 #e4eafc;W 154 884 65 10 #e4eafc;N 120 780 26 8 7 6 r;N 190 780 26 8 7 6 r
K 247 758 66 112 0.14;K 317 758 66 112 0.12;K 389 758 66 251 0.22;K 459 758 67 112 0.03;W 248 779 65 8 #e4eafc;W 318 779 65 8 #e4eafc;W 390 779 65 8 #e4eafc;N 260 781 45 5 8 5 #7f94f0;N 330 781 45 5 8 5 #7f94f0;N 400 781 45 5 8 5 #7f94f0
K 540 758 67 168 0.16;K 611 758 65 168 0.16;K 679 758 66 111 0.16;K 540 930 67 105 0.16;K 611 932 65 104 0.03;K 540 1038 67 106 0.14;W 541 788 65 9 #e8eefc;W 612 788 64 9 #e8eefc;W 680 788 64 9 #e8eefc;N 545 966 58 5 8 5 #8ea2f0;N 545 1074 58 5 8 5 #8ea2f0;W 680 812 64 4 #f8d8e0`);

draw(2180, 60, 3, 3, `
D 99 222 3;L 87 249 134;W 87 262 44 5;D 99 272 3;L 87 296 136;S 88 316 52 150 20 #a8b8a0;S 149 316 51 188 24 #d0e8dc;N 88 330 100 120 100 28 #cfe0d6,#ead8dc,#f0e4cc 1;W 140 316 9 190 #262628;N 149 330 51 160 51 28 #cfe8da,#fae0d4,#f0e0f0 1;W 88 434 44 4 #4050c0;W 191 325 6 170 #b8b0ec;N 213 316 3 194 3 30 i 1;W 88 395 52 4 #262628;W 149 416 51 4 #262628
D 313 183 3;D 313 272 3;Q 362 269 74;L 301 296 136;D 313 301 3;N 302 225 5 150 5 50 n;N 305 350 8 4 5 4 g;N 360 317 12 120 6 28 d,g
D 548 230 3;L 535 250 133;R 533 269 212 127 dusk teal 0;W 560 344 10 12 w;M 584 378 1.02;D 645 406 3;W 533 413 28 3 u
R 538 451 210 125 dawn teal 0 Title;R 538 580 210 127 mint rose 0 Title;R 538 709 210 126 neon teal 1 Title;R 538 838 210 125 lagoon rose 1 Title
D 809 209 3;L 800 229 132;D 809 276 3;L 800 296 135;W 805 350 16 2 i;W 833 350 18 2 i;W 861 350 16 2 i;W 797 330 2 20 n
D 1044 203 3;D 1044 212 3;L 1033 233 135;D 1094 281 3;L 1033 296 136;W 1032 252 4 4 b;W 1074 328 5 4 d;N 1086 345 14 18 8 10 d;W 1084 320 2 46 n;W 1079 376 16 2 i;W 1095 376 17 2 i;W 1120 376 18 2 i;W 1148 376 14 2 i
D 1284 209 1;Q 1303 203 50;D 1371 209 1;L 1268 233 132;K 1264 246 39 81 0.03;W 1276 264 4 36 #b0bcf8;D 1284 318 3;W 1309 248 4 4 g;W 1314 283 4 4 g;L 1268 342 137;W 1272 355 4 52 #8a8ab0;W 1326 367 8 3 g;W 1326 397 8 3 g`);

draw(2660, 60, 3, 3, `
D 62 272 3;D 125 272 2;D 175 272 1;D 171 276 3;D 166 289 3;L 50 296 140;D 171 305 3;D 62 310 3;D 62 348 3;D 62 373 3;D 62 398 3;D 62 419 3;D 62 440 3;D 62 482 3;D 62 520 3;D 62 553 3;D 62 604 3
N 50 320 95 6 12 6 g,d;W 118 320 23 4;W 158 329 54 6 #666;W 162 346 24 5 g;N 162 317 15 6 6 6 g;W 50 355 84 7 n;W 50 369 84 10 #dcdce8;W 118 394 12 8 w;N 50 416 165 6 16 6 g,d 0.5;N 50 462 165 6 16 6 g,d 0.5;W 130 486 29 6 w;W 50 503 30 7 n;W 130 503 28 7 n;N 50 526 165 6 10 6 g,d 0.6;W 184 546 28 8 n;N 50 566 150 3 10 3 w,g;N 50 580 150 5 14 5 n;N 50 598 60 4 10 4 g,w;W 143 598 42 4 g;W 184 612 28 5 n;W 130 580 30 4 n
N 52 648 60 8 12 5 w 1;W 80 656 70 4;N 50 670 98 12 8 6 n 1;D 62 658 3;D 192 658 3
W 53 710 50 15 #e0e4f4;N 54 732 26 75 7 7 w,g 0.95;W 118 710 50 14 n;N 120 732 26 75 9 7 n 1;W 180 702 117 88 url(#night);W 184 712 58 8 #aab;W 184 721 80 11 #cacad8;W 184 777 80 10 #555a66;D 192 764 3
D 62 790 1;D 92 790 3;D 81 803 3;M 98 828 1.05;Q 84 786 30;N 130 830 22 20 7 6 w,g;W 180 804 14 66 #c4c4cc;N 194 808 16 48 14 9 g 1;W 180 850 26 20 w;D 159 856 3;N 54 862 100 20 9 7 n 1
N 54 900 24 48 7 8 w,g 1;N 129 900 30 48 29 8 w 1;N 174 900 24 48 8 8 n 1;N 250 900 30 48 29 8 n 1;D 62 965 3;D 184 965 3
K 50 1007 113 24 0;N 56 1012 92 14 10 5 #eef0fa;W 190 1010 18 6 w;W 190 1020 18 3 g;W 190 1027 18 3 w;D 67 1062 4;D 92 1062 1;D 118 1062 1;D 62 1074 3;D 62 1112 3;W 54 1116 53 14 #e4e4ee;W 54 1131 52 12 n;W 50 1153 20 3 u;W 54 1156 32 5 w;W 54 1162 32 6 n
D 335 209 3;L 325 225 136;D 335 234 3;W 323 249 51 6;D 331 285 3;L 325 296 137;S 323 328 49 22 3;S 378 328 50 22 3;S 323 375 49 20 2;S 378 375 50 20 2;W 323 345 105 3 #c8b890;N 325 362 105 4 28 4 u,i;N 325 410 105 10 28 6 #724020 0.5;D 331 453 3;D 335 495 3;N 324 540 14 6 6 6 i
D 596 197 3;D 596 209 3;L 582 225 134;W 588 239 8 4 n;D 621 285 2;D 596 285 1;L 582 296 138;S 584 328 79 27 2;S 663 328 79 27 2;S 584 359 79 28 2;S 663 359 79 28 2;S 584 392 79 13 1;S 663 392 79 13 1;S 584 411 79 13 1;S 663 411 79 13 1;D 596 407 3;D 680 407 3
S 584 447 78 210 16;D 596 633 3;K 668 446 75 23 0.1
K 584 679 78 24 0.1;K 584 706 78 47 0.1;K 584 756 78 48 0.14;K 584 807 78 63 0.1;K 664 679 78 103 0.12;K 664 786 78 68 0.08;K 664 857 78 60 0.06;K 664 942 78 25 0.18;K 664 970 78 23 0.1;K 664 999 78 24 0.14;K 664 1026 78 24 0.1;K 664 1055 78 25 0.16
D 836 188 3;D 836 209 3;L 820 225 136;S 821 230 75 13 1;D 836 235 3;S 824 250 77 13 1;D 836 272 3;L 820 296 139
S 822 313 80 32 2;S 905 313 78 32 2;W 822 348 161 14 #2a46e4;W 822 366 161 13 #2a46e4;W 882 371 17 5 w;W 962 371 18 5 w;S 822 383 80 18 1 b;S 905 383 78 18 1 b;S 822 405 80 42 2 r;S 905 405 78 42 2 r;V 822 450 80 18;V 905 450 78 18;S 822 472 80 30 2 b;S 905 472 78 30 2 b;V 822 507 80 36;V 905 507 78 36;W 853 516 20 20 #9094b0;W 857 520 12 12 #e6e9f8;W 933 515 19 20 #40445c;W 940 521 7 7 w
N 984 313 3 238 3 22 u 1;D 836 541 3;D 1012 537 3;W 822 580 161 39 #77777a;W 822 586 161 6 #e8e8ea;W 822 611 161 6 #e8e8ea;W 822 597 161 6 #c4c4c6;D 836 600 3;W 984 577 2 40 u;K 999 577 76 57 0.25
W 822 644 54 50 #c8ccd4;W 828 668 42 24 #20242c;O 848 654 4.2 #a26a5c;W 840 656 18 12 #54545c;D 836 671 3;W 881 644 76 50 c;W 881 644 76 12 w;W 884 657 72 5 #b8a8f8;N 905 682 30 5 7 5 w
K 822 716 79 6;K 822 731 79 46;D 836 747 3;N 826 769 70 5 9 5 #7f94f0;S 822 787 161 9 1;S 822 801 161 9 1;S 822 815 161 9 1;S 822 829 161 9 1;D 836 811 3;W 984 790 2 50 u
V 822 854 79 28;W 841 869 41 6 c;K 822 887 79 30 0.1;W 885 908 14 8 #a890f4;K 822 922 79 29 0.1;W 881 943 18 7 e;K 822 957 79 30 0.1;W 882 979 18 5 c
D 1074 192 3;L 1063 225 133;W 1062 232 8 8 #2a4a8a;D 1074 260 3;D 1074 276 3;L 1062 296 137;N 1064 299 34 8 6 5 w,g;N 1105 300 30 6 7 6 #3a3a3a;N 1064 316 8 50 7 7 #2a4a9a,n 1;N 1072 316 30 18 6 6 w,g;N 1085 326 34 8 6 4 w;N 1075 346 42 18 8 6 #3a3a3a,#5a4a30`);

draw(3060, 60, 2.376, 3, `
D 81 197 3;G 231 205 3;G 267 205 1;G 316 205 1;D 327 205 3;L 70 226 282;K 70 236 64 54 0.3;W 137 261 18 3 u;W 137 275 18 3 n;I 218 245 41 32 0.5;I 268 245 38 32 0.5;I 317 245 75 44 0.7;M 109 307 0.97;N 71 332 20 4 6 4 u
D 470 197 3;D 537 197 3;L 457 225 285;K 458 238 61 57 0.1;K 528 238 60 81 0.1;D 470 318 3;D 620 314 3;N 459 332 20 4 6 4 u;K 614 355 58 24 0.1;K 676 355 60 24 0.1;K 614 382 58 26 0.05;K 676 382 60 26 0.1
K 462 358 58 42 0.1;K 526 358 59 48 0.08;K 462 412 58 51 0.1;K 526 412 59 57 0.1;K 462 475 58 58 0.12;K 526 475 59 64 0.12;K 462 544 58 46 0.1;K 526 544 59 47 0.1;D 467 588 3;N 466 456 50 4 8 4 #a0b0fa;N 530 463 50 4 8 4 #a0b0fa;N 466 526 50 4 8 4 #a0b0fa;N 530 532 50 4 8 4 #a0b0fa
K 458 629 61 61 0.08;K 458 693 61 60 0.08;K 458 757 61 25 0.06
D 844 192 3;D 844 204 3;D 844 238 3;D 844 260 3;L 832 271 281;M 968 273 1.02;D 1016 301 3;W 831 300 54 4;D 841 306 3;N 831 278 8 12 5 6 o,i;N 831 332 20 4 6 4 u;K 834 347 88 13 0.1;N 834 367 26 4 6 4 g,d;K 931 347 51 115 0.15;K 988 347 53 115 0.12;K 1045 347 54 115 0.02;W 937 422 9 6 c;W 995 410 6 8 #8a50e8;W 934 352 3 60 #f0c890;W 989 352 3 80 #f0c890
D 1221 209 3;W 1213 223 7 3 u;W 1213 252 8 12 #1c3a5a;W 1229 253 6 10 g`);

const accents = ['g', 'o', 'r', 'e'];
const groups = [[[376, 53], [434, 54], [491, 54], [549, 54]], [[690, 53], [748, 55], [806, 52], [863, 54]],
  [[1029, 26], [1062, 27], [1095, 27], [1129, 27]], [[1241, 25], [1272, 28], [1304, 26], [1336, 27]]];
const columns = [[72, 66, 0.52], [143, 66, 0.05], [212, 66, 0.52], [283, 66, 0.05]];
groups.forEach(g => g.forEach(([y, h], r) => columns.forEach(([x, w, s], c) =>
  draw(3060, 60, 2.376, 3, `I ${x} ${y} ${w} ${c > 1 ? h - 4 : h} ${s} ${accents[r]}`))));
[[608, 37], [922, 37], [1163, 22], [1372, 22]].forEach(([y, h]) =>
  draw(3060, 60, 2.376, 3, `I 212 ${y} 44 ${h} 0.55;I 262 ${y} 42 ${h} 0.08`));

draw(120, 470, 3, 3, `
D 127 38 3;D 127 48 3;N 240 57 45 3 8 3 g;W 300 36 6 7 #6a6af0;N 325 54 30 8 24 6 #25254a
N 118 79 145 5 7 5 g,d,#24348a;D 127 84 3;W 118 94 48 8 #aaa;W 118 103 50 7 g;W 163 94 60 6 b;W 232 94 30 7 #ecd8dc;N 120 112 148 2 28 2 u 1;W 267 92 2 20 u
K 118 127 35 54 0.25;K 155 127 34 43 0.08;K 118 207 35 54 0.25;K 155 207 34 54 0.08;K 190 207 43 33 0.08;K 118 288 35 53 0.22;K 155 288 34 49 0.12;K 118 367 35 53 0.22;K 155 367 34 25 0.12;K 118 447 35 48 0.22;K 155 447 34 57 0.06
K 118 532 35 52 0.18;K 155 558 28 9 0;D 77 563 3;K 64 603 34 54 0.1;K 118 604 35 53 0.25;K 155 616 34 31 0.1;K 118 684 35 53 0.25;K 155 714 34 23 0.06;K 118 764 35 53 0.25;K 155 781 34 36 0.1;K 118 844 35 52 0.25;K 155 855 34 41 0.04;K 118 924 35 53 0.16`);

layers.forEach((g, i) => { g.innerHTML = parts[i].join(''); });

// Frame names: text, left edge, baseline
const names = [['T...', 60.5, 46], ['N...', 156, 102], ['...', 243, 102], ['Avatars', 305.5, 102], ['...', 520.5, 102],
  ['B...', 574, 102], ['...', 656, 102], ['Ti...', 716, 102], ['Cards', 786, 102], ['Ill...', 904, 102], ['H...', 976.5, 102],
  ['A...', 1050.5, 102], ['Textfi...', 1131.5, 102], ['Dropdown', 1278, 102], ['T...', 1546.5, 103.6], ['T...', 1619, 103.6],
  ['S...', 1692, 103.6], ['F...', 1762.5, 103.6], ['S...', 1836, 103.6], ['Details', 1923, 103.6], ['T...', 2201.5, 103.6],
  ['S...', 2279.5, 103.6], ['T...', 2359, 103.6], ['C...', 2442, 103.6], ['R...', 2521, 103.6], ['T...', 2599.5, 103.6],
  ['S...', 2676.5, 103.6], ['I...', 2767, 103.6], ['R...', 2854, 103.6], ['D...', 2933.5, 103.6], ['C...', 3009, 103.6],
  ['Info-...', 3085, 103.6], ['Set-u...', 3249, 103.6], ['Notifi...', 3405, 103.6], ['Loader', 3562, 103.6],
  ['T...', 60, 102, 'ghost'], ['A...', 391.5, 184.7, 'component'], ['Dropdown', 1319, 293.7, 'component'], ['Inf...', 3130, 173.5, 'component']];
const holder = document.getElementById('labels');
names.forEach(([text, x, base, kind]) => {
  const el = document.createElement('span');
  el.className = 'label' + (kind ? ' label--' + kind : '');
  el.textContent = text;
  el.style.left = x + 'px';
  el.style.top = base - 31 + 'px';
  holder.appendChild(el);
});
```
